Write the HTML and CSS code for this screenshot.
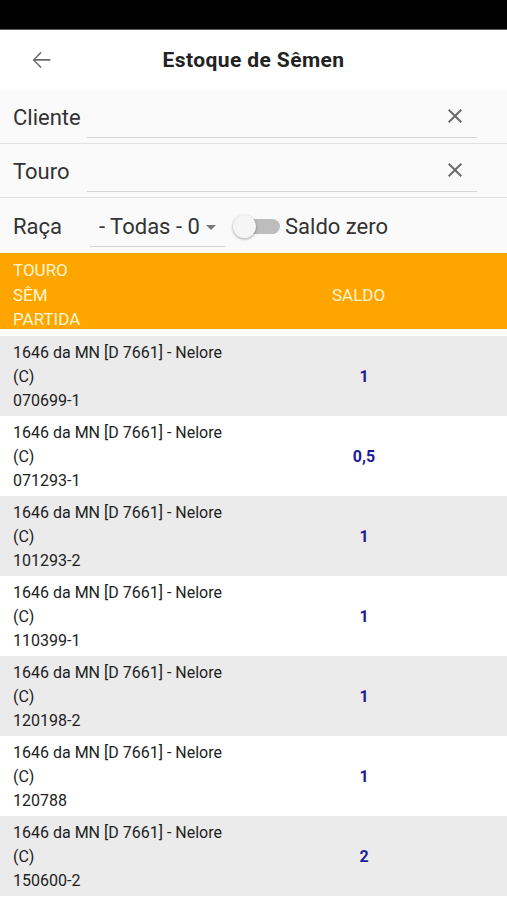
FILE: index.html
```html
<!DOCTYPE html>
<html lang="pt">
<head>
  <meta charset="UTF-8" />
  <meta name="viewport" content="width=device-width, initial-scale=1" />
  <title>Estoque de Sêmen</title>
  <link rel="stylesheet" href="styles.css">
</head>
<body>
  <div class="status-bar"></div>

  <header class="appbar">
    <svg class="back" width="28" height="28" viewBox="0 0 24 24">
      <path d="M20 11.2H7.2l5.3-5.3-.9-.9L4.8 12l6.8 6.8.9-.9-5.3-5.3H20v-1.4z" fill="#6b6b6b"/>
    </svg>
    <h1>Estoque de Sêmen</h1>
  </header>

  <div class="filters">
    <div class="field">
      <span class="label">Cliente</span>
      <div class="input">
        <svg class="clear" width="24" height="24" viewBox="0 0 24 24">
          <path d="M19 6.41L17.59 5 12 10.59 6.41 5 5 6.41 10.59 12 5 17.59 6.41 19 12 13.41 17.59 19 19 17.59 13.41 12z" fill="#6b6b6b"/>
        </svg>
      </div>
    </div>
    <div class="field">
      <span class="label">Touro</span>
      <div class="input">
        <svg class="clear" width="24" height="24" viewBox="0 0 24 24">
          <path d="M19 6.41L17.59 5 12 10.59 6.41 5 5 6.41 10.59 12 5 17.59 6.41 19 12 13.41 17.59 19 19 17.59 13.41 12z" fill="#6b6b6b"/>
        </svg>
      </div>
    </div>
    <div class="field last">
      <span class="label">Raça</span>
      <div class="select">
        <span>- Todas - 0</span>
        <span class="caret"></span>
      </div>
      <div class="switch"><span class="thumb"></span></div>
      <span class="switch-label">Saldo zero</span>
    </div>
  </div>

  <div class="table-head">
    <div class="col-touro">TOURO<br>SÊM<br>PARTIDA</div>
    <div class="col-saldo">SALDO</div>
  </div>

  <div class="rows">
    <div class="row">
      <div class="col-touro">1646 da MN [D 7661] - Nelore<br>(C)<br>070699-1</div>
      <div class="saldo">1</div>
    </div>
    <div class="row">
      <div class="col-touro">1646 da MN [D 7661] - Nelore<br>(C)<br>071293-1</div>
      <div class="saldo">0,5</div>
    </div>
    <div class="row">
      <div class="col-touro">1646 da MN [D 7661] - Nelore<br>(C)<br>101293-2</div>
      <div class="saldo">1</div>
    </div>
    <div class="row">
      <div class="col-touro">1646 da MN [D 7661] - Nelore<br>(C)<br>110399-1</div>
      <div class="saldo">1</div>
    </div>
    <div class="row">
      <div class="col-touro">1646 da MN [D 7661] - Nelore<br>(C)<br>120198-2</div>
      <div class="saldo">1</div>
    </div>
    <div class="row">
      <div class="col-touro">1646 da MN [D 7661] - Nelore<br>(C)<br>120788</div>
      <div class="saldo">1</div>
    </div>
    <div class="row">
      <div class="col-touro">1646 da MN [D 7661] - Nelore<br>(C)<br>150600-2</div>
      <div class="saldo">2</div>
    </div>
  </div>
</body>
</html>
```

FILE: styles.css
```css
body {
  margin: 0;
  font-family: Roboto, "Liberation Sans", sans-serif;
  background: #ffffff;
  color: #222;
}

/* Status bar and app bar */
.status-bar {
  height: 29px;
  background: #000;
  border-bottom: 1px solid #5a5a5a;
}

.appbar {
  height: 60px;
  display: flex;
  align-items: center;
  position: relative;
  background: #fff;
}

.appbar .back {
  margin-left: 27px;
}

.appbar h1 {
  position: absolute;
  left: 0;
  right: 0;
  margin: 0;
  text-align: center;
  font-size: 21px;
  font-weight: bold;
  letter-spacing: 0.4px;
  color: #222;
}

/* Filters */
.filters {
  background: #fafafa;
}

.field {
  height: 53px;
  display: flex;
  align-items: center;
  padding-left: 13px;
  border-bottom: 1px solid #e2e2e2;
}

.field.last {
  height: 55px;
  border-bottom: none;
}

.label {
  font-size: 22px;
  color: #333;
  width: 74px;
  margin-top: 1px;
}

.input {
  width: 390px;
  height: 36px;
  margin-top: 6px;
  border-bottom: 1px solid #d6d6d6;
  display: flex;
  justify-content: flex-end;
  align-items: center;
}

.clear {
  margin-right: 10px;
  margin-top: -6px;
}

.select {
  width: 135px;
  margin-left: 3px;
  height: 36px;
  margin-top: 6px;
  box-sizing: border-box;
  padding-left: 9px;
  border-bottom: 1px solid #d6d6d6;
  display: flex;
  align-items: center;
  font-size: 22px;
  color: #333;
}

.select span:first-child {
  margin-top: -4px;
}

.caret {
  width: 0;
  height: 0;
  margin-left: 6px;
  margin-top: -2px;
  border-left: 5px solid transparent;
  border-right: 5px solid transparent;
  border-top: 5px solid #777;
}

.switch {
  position: relative;
  width: 35px;
  height: 15px;
  margin-left: 20px;
  margin-top: 2px;
  border-radius: 8px;
  background: #bdbdbd;
}

.switch .thumb {
  position: absolute;
  left: -12px;
  top: -4px;
  width: 23px;
  height: 23px;
  border-radius: 50%;
  background: #f5f5f5;
  box-shadow: 0 1px 3px rgba(0, 0, 0, 0.35);
}

.switch-label {
  margin-left: 5px;
  margin-top: 2px;
  font-size: 22px;
  color: #333;
}

/* Table */
.table-head {
  display: grid;
  grid-template-columns: 319px 120px;
  align-items: center;
  height: 76px;
  box-sizing: border-box;
  background: #ffa500;
  color: #fff6d0;
  font-size: 17px;
  line-height: 24.5px;
  padding: 5px 0 0 13px;
}

.rows {
  margin-top: 7px;
}

.row {
  display: grid;
  grid-template-columns: 287px 128px;
  align-items: center;
  height: 80px;
  box-sizing: border-box;
  padding: 4px 0 2px 13px;
  font-size: 16px;
  line-height: 24px;
  color: #222;
}

.row:nth-child(odd) {
  background: #ebebeb;
}

.saldo {
  text-align: center;
  font-weight: bold;
  color: #1c1c9c;
}
```
